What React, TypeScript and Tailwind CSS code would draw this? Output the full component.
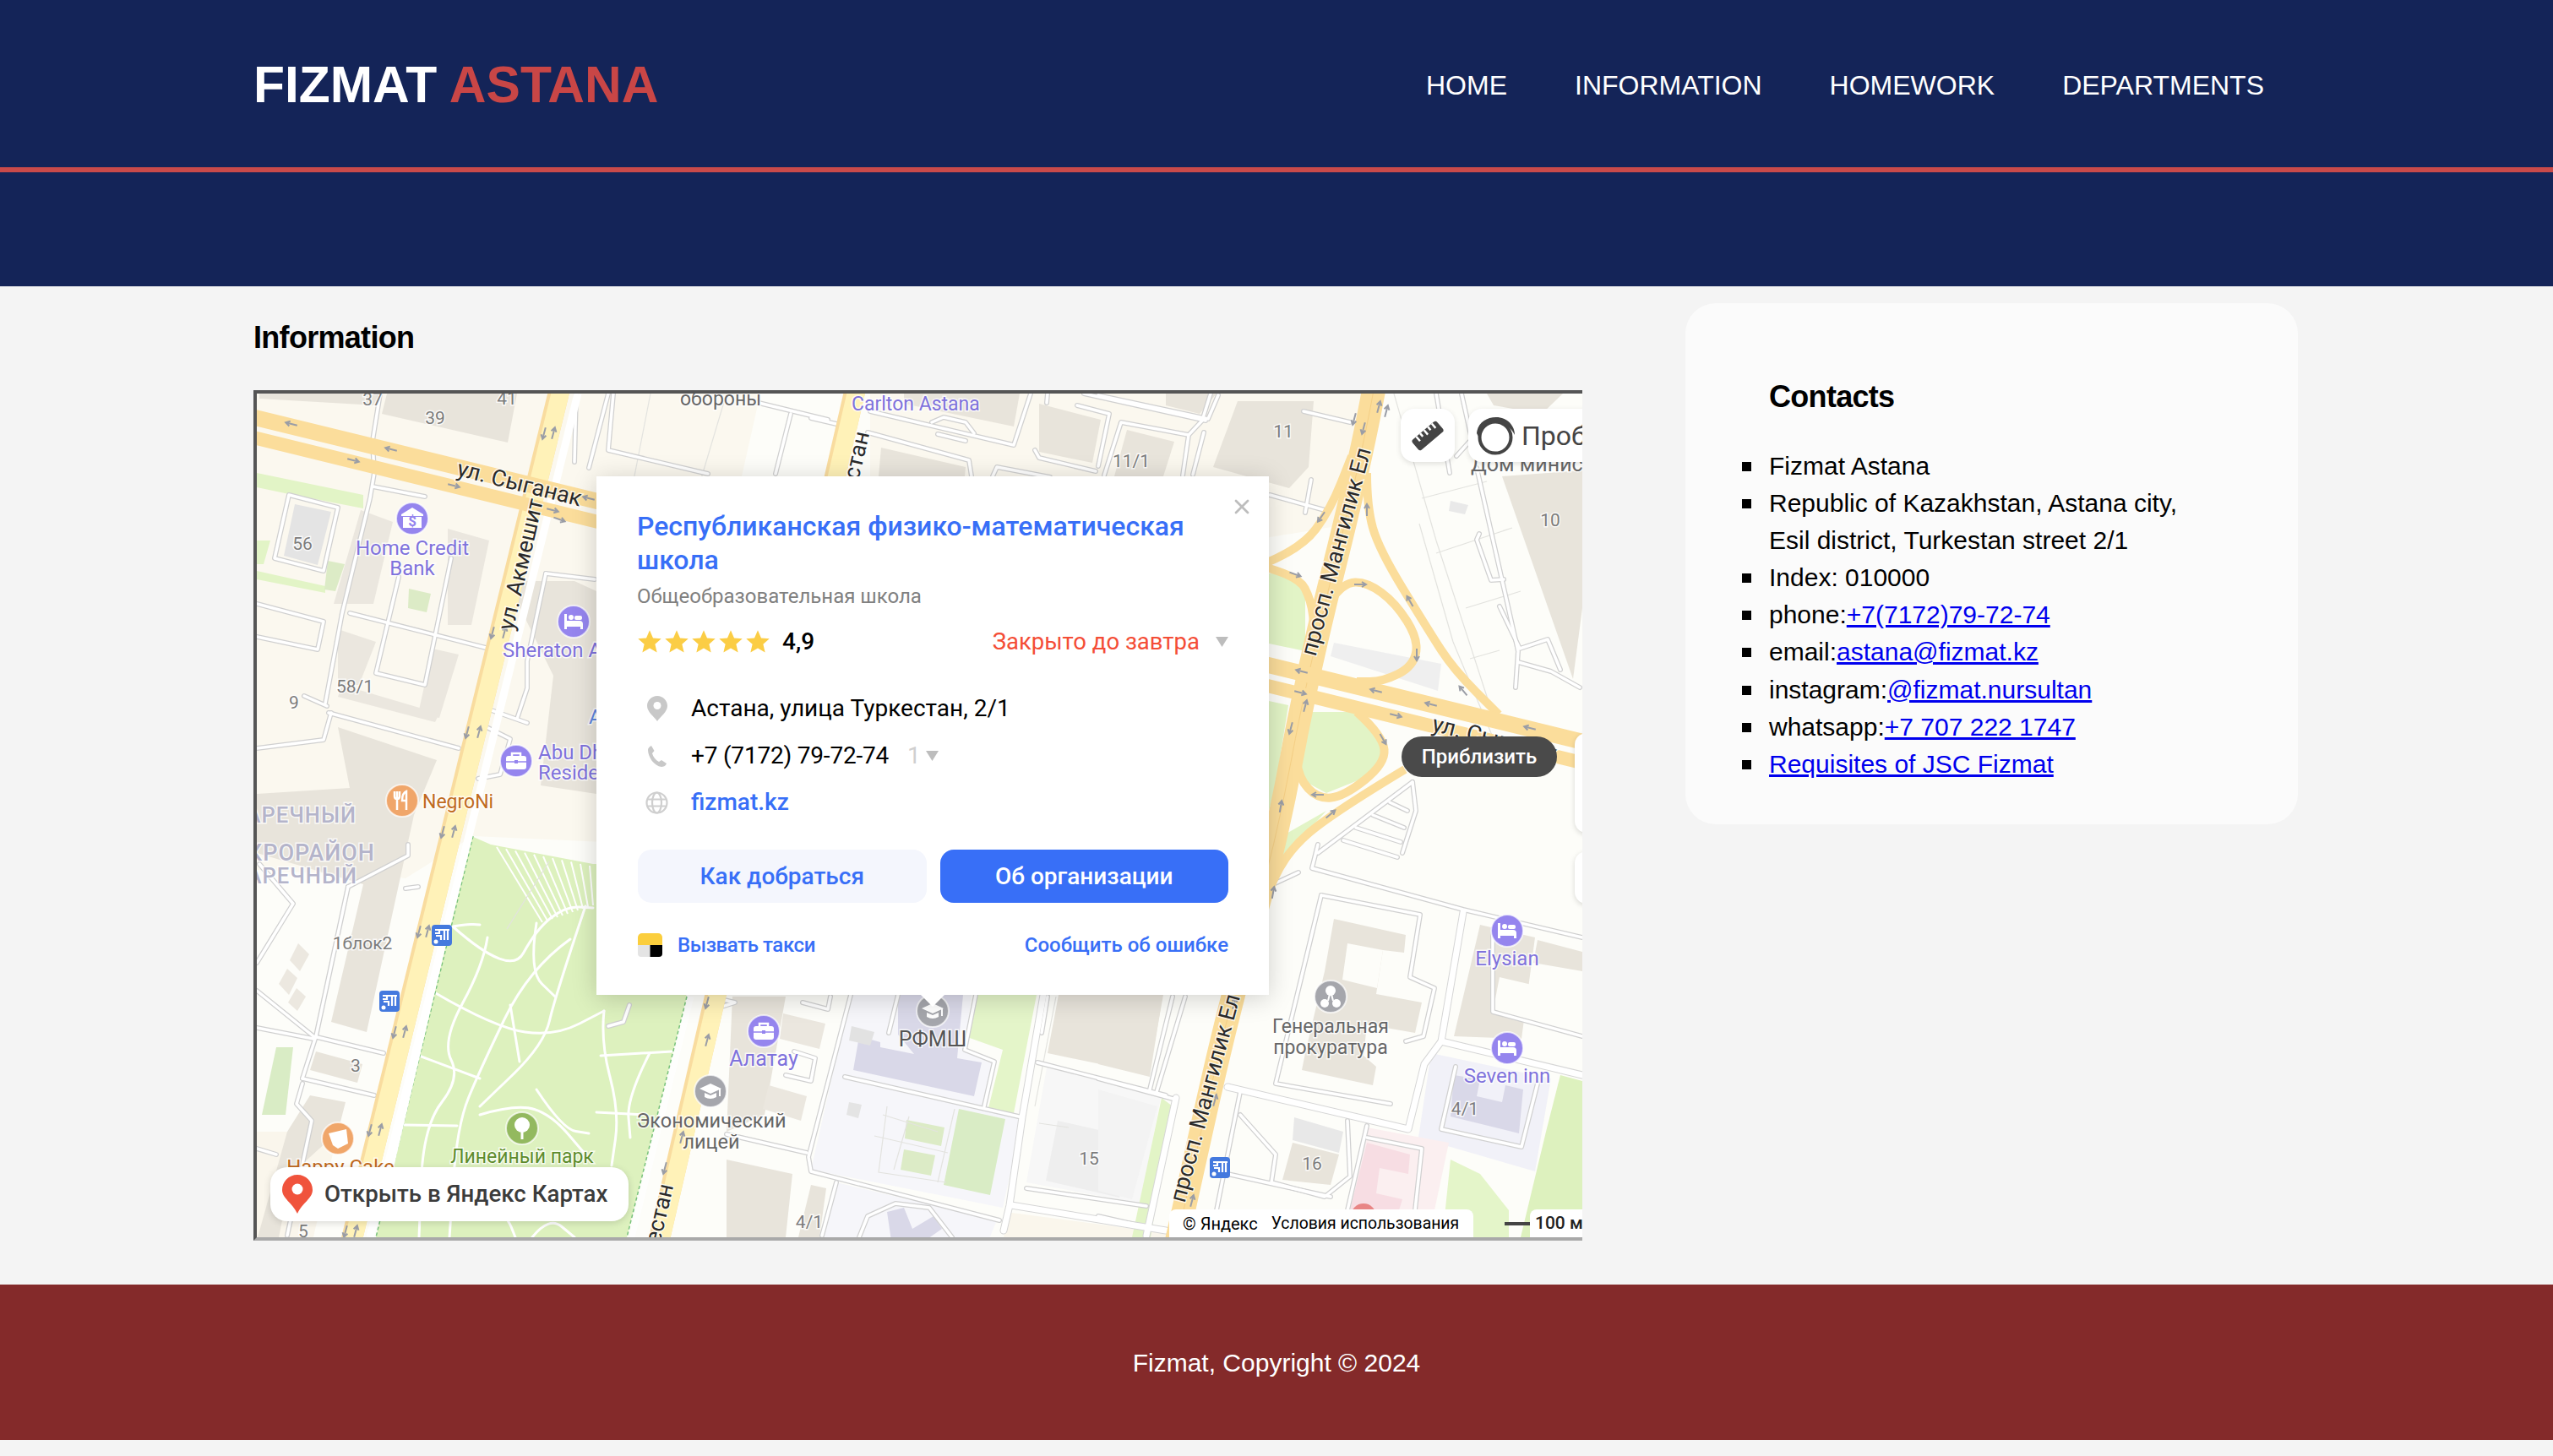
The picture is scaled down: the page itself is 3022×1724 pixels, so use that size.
import { X } from "lucide-react";
import type { ReactNode } from "react";

type Pt = [number, number];

// smooth line through a list of points
function curve(pts: Pt[]) {
  let d = `M${pts[0][0]},${pts[0][1]}`;
  for (let i = 1; i < pts.length - 1; i++) {
    const mx = (pts[i][0] + pts[i + 1][0]) / 2;
    const my = (pts[i][1] + pts[i + 1][1]) / 2;
    d += ` Q${pts[i][0]},${pts[i][1]} ${mx},${my}`;
  }
  const last = pts[pts.length - 1];
  return `${d} L${last[0]},${last[1]}`;
}

const plots: [string, string][] = [
  ["#fbf8ef", "304,466 900,466 780,1000 560,990 480,1040 304,1030"],
  ["#fdfdf9", "304,1030 480,1040 440,1469 304,1469"],
  ["#fbf8ef", "1030,466 1640,466 1600,620 1480,640 1030,640"],
  ["#f6f6fa", "1007,1178 1150,1178 1142,1243 1177,1257 1165,1310 1210,1323 1187,1430 960,1385"],
  ["#f6f6fa", "990,1400 1180,1445 1170,1469 970,1469"],
  ["#f1f1f8", "1694,1247 1836,1277 1817,1387 1679,1347"],
  ["#fbeff0", "1618,1335 1715,1353 1698,1433 1598,1433"],
  ["#faf6ec", "1190,1435 1380,1460 1380,1469 1188,1469"],
  ["#faf6ec", "304,1340 400,1340 370,1469 304,1469"],
  ["#f7f7f7", "1240,1258 1375,1295 1350,1425 1215,1400"],
];

const greens: [string, string][] = [
  ["#ddf1be", "558,990 581,1000 702,1023 740,1023 813,1180 742,1465 445,1465"],
  ["#e2f4c6", "304,560 430,586 430,602 342,585 304,577"],
  ["#e2f4c6", "304,676 385,694 385,702 304,686"],
  ["#e2f4c6", "304,640 320,640 312,668 304,668"],
  ["#dcebc6", "388,664 408,668 397,700 384,698"],
  ["#dcebc6", "484,697 510,703 505,725 483,720"],
  ["#e2f4c6", "1502,679 1528,680 1545,700 1545,771 1502,762"],
  ["#e2f4c6", "1541,843 1606,843 1637,880 1630,915 1570,939 1535,920"],
  ["#e2f4c6", "1502,830 1525,835 1510,930 1502,960"],
  ["#e2f4c6", "1500,1000 1570,960 1525,1010 1500,1060"],
  ["#e4f5c9", "1157,1178 1227,1178 1200,1318 1170,1312 1187,1243 1145,1228"],
  ["#dcebc6", "1073,1326 1118,1335 1114,1357 1071,1348"],
  ["#dcebc6", "1070,1361 1107,1368 1102,1392 1066,1385"],
  ["#d9ecc5", "1135,1313 1190,1325 1172,1415 1117,1403"],
  ["#d9ecc5", "1803,1165 1840,1173 1836,1190 1801,1183"],
  ["#ddf1be", "1847,1273 1873,1280 1873,1465 1800,1465 1830,1340"],
  ["#e4f5c9", "1717,1373 1752,1390 1786,1433 1786,1465 1725,1465 1710,1440"],
  ["#e2f4c6", "1375,1300 1388,1310 1362,1465 1340,1465"],
  ["#d9ecc5", "327,1240 347,1240 338,1320 310,1320"],
];

const buildings: [string, string][] = [
  ["#e8e4db", "458,466 612,466 601,524 452,490"],
  ["#e8e4db", "307,466 450,466 445,480 307,472"],
  ["#e4e4e4", "349,597 392,606 376,669 336,658"],
  ["#ebe7df", "427,604 465,618 442,715 395,715"],
  ["#ebe7df", "530,626 579,640 558,740 530,740"],
  ["#ebe7df", "400,745 445,760 425,811 400,811"],
  ["#ebe7df", "512,768 543,775 520,850 495,845"],
  ["#ebe7df", "405,811 520,845 515,855 400,825"],
  ["#e8e4db", "600,688 680,688 706,700 706,940 640,930 655,800"],
  ["#e8e4db", "400,861 517,900 490,965 434,1222 392,1210 430,1047 304,1010 304,940 414,933"],
  ["#e8e4db", "867,1180 930,1180 905,1320 860,1340"],
  ["#ebe7df", "927,1200 977,1212 970,1242 923,1230"],
  ["#ebe7df", "910,1285 955,1298 948,1327 903,1313"],
  ["#e8e4db", "860,1373 938,1390 930,1465 860,1465"],
  ["#e8e4db", "960,1403 978,1407 970,1465 945,1465"],
  ["#d9d8e8", "1063,1178 1140,1178 1133,1253 1162,1258 1153,1298 1010,1267 1017,1227 1042,1234 1042,1240 1082,1248 1063,1225"],
  ["#d9d8e8", "1050,1435 1070,1430 1080,1455 1105,1440 1115,1455 1095,1469 1055,1469"],
  ["#e8e4db", "1253,1178 1377,1178 1360,1272 1240,1247"],
  ["#eeeeee", "1252,1327 1340,1347 1325,1418 1238,1398"],
  ["#e8e4db", "1465,475 1555,475 1549,553 1526,578 1436,553"],
  ["#e8e4db", "1380,466 1440,466 1420,490 1380,480"],
  ["#e8e4db", "1334,509 1390,523 1377,564 1319,564"],
  ["#e8e4db", "1230,478 1303,497 1293,548 1230,535"],
  ["#e8e4db", "1043,530 1143,553 1142,564 1040,564"],
  ["#e8e4db", "1070,466 1207,466 1200,505 1070,478"],
  ["#e8e4db", "1778,564 1873,557 1873,720 1862,804"],
  ["#e8e4db", "1760,466 1850,466 1825,490 1768,480"],
  ["#e9e9e9", "1717,593 1738,598 1734,609 1715,605"],
  ["#efefef", "1579,761 1706,786 1702,818 1575,777"],
  ["#e8e4db", "1300,1180 1376,1180 1361,1275 1300,1260"],
  ["#f3f3f3", "1300,1290 1370,1310 1340,1420 1300,1410"],
  ["#e8e4db", "1579,1088 1664,1107 1662,1128 1637,1125 1629,1177 1683,1187 1675,1223 1618,1213 1614,1250 1629,1263 1625,1285 1541,1267 1545,1247 1553,1213 1568,1150"],
  ["#fdfdf9", "1595,1117 1637,1125 1630,1170 1589,1160"],
  ["#e8e4db", "1752,1095 1817,1110 1801,1230 1721,1227"],
  ["#fdfdf9", "1775,1157 1873,1180 1873,1227 1767,1198"],
  ["#e8e4db", "1820,1113 1873,1127 1873,1150 1815,1140"],
  ["#d9d8e8", "1721,1273 1752,1278 1748,1298 1778,1305 1782,1285 1803,1290 1798,1342 1717,1322"],
  ["#f7dde3", "1618,1353 1669,1367 1667,1390 1633,1383 1629,1413 1660,1420 1656,1433 1598,1433"],
  ["#e8e4db", "1530,1353 1585,1367 1575,1403 1518,1397"],
  ["#e8e8e8", "1532,1323 1590,1340 1585,1365 1530,1350"],
  ["#e8e4db", "374,1245 429,1260 423,1282 367,1267"],
  ["#e8e4db", "367,1297 409,1305 400,1340 345,1390 330,1465 305,1465 340,1340"],
  ["#ece8e0", "353,1117 366,1130 355,1150 343,1137"],
  ["#ece8e0", "340,1147 352,1158 342,1178 330,1165"],
  ["#ece8e0", "351,1170 362,1180 352,1197 341,1187"],
  ["#e2e2e2", "1008,1215 1035,1222 1030,1238 1005,1232"],
  ["#e4e4e4", "1005,1305 1020,1308 1016,1324 1002,1320"],
];

const lanes = [
  "450,466 441,522 443,560 438,590 405,726 385,833",
  "441,576 503,588",
  "342,586 400,601 383,676 325,661 342,586",
  "414,726 575,767",
  "534,661 503,811 445,797 472,683",
  "389,844 543,886",
  "304,886 383,876 392,844",
  "360,824 387,836",
  "304,715 383,736 376,769 304,754",
  "646,679 624,783 624,815 612,851",
  "579,840 624,856",
  "574,860 604,875 592,917 566,922",
  "646,679 704,686",
  "726,466 720,533 838,561",
  "682,466 680,547",
  "697,554 720,466",
  "894,476 980,497",
  "936,490 918,561",
  "960,495 1003,505",
  "1027,512 1147,545 1150,564",
  "1030,487 1200,527 1220,466",
  "1103,500 1117,494 1143,500 1153,513",
  "1110,514 1143,522",
  "1175,564 1180,553 1243,565",
  "1275,480 1313,490 1300,552",
  "1225,533 1230,542 1297,558",
  "1240,466 1239,477",
  "1307,563 1327,500 1407,515 1400,563",
  "1407,515 1423,498 1433,466",
  "1283,466 1427,498",
  "1425,512 1412,562",
  "1300,468 1430,496 1442,468",
  "1543,487 1598,500",
  "1503,586 1568,604",
  "1552,568 1545,607",
  "1748,554 1797,771 1794,814",
  "1775,718 1799,768 1832,757 1847,793",
  "1751,632 1748,639 1765,687 1780,686",
  "1797,784 1836,795 1870,814",
  "1700,466 1716,560",
  "1730,466 1742,520 1724,540",
  "1672,926 1560,1010",
  "1672,926 1676,960 1660,1010",
  "1645,950 1666,960",
  "1625,965 1662,980",
  "1605,980 1658,997",
  "1590,995 1654,1015",
  "1560,1000 1553,1028 1732,1077 1873,1110",
  "1564,1060 1681,1083 1669,1157 1698,1170 1685,1227 1664,1233",
  "1564,1060 1510,1283 1646,1307",
  "1537,1033 1507,1047",
  "1767,1100 1767,1198 1873,1227",
  "1723,1263 1706,1337 1801,1358 1820,1283",
  "1468,1320 1510,1367 1505,1400 1568,1417 1598,1393 1595,1327",
  "1618,1333 1595,1433",
  "1618,1347 1683,1360 1675,1433",
  "1468,1293 1434,1463",
  "1300,1277 1392,1302",
  "1403,1180 1369,1293",
  "1388,1180 1361,1290",
  "1453,1390 1575,1417",
  "1300,1440 1357,1453",
  "1007,1178 957,1370 960,1387 1183,1445",
  "1063,1178 1052,1223",
  "1155,1178 1142,1243 1177,1257 1165,1310",
  "1000,1275 1210,1323",
  "1228,1258 1380,1297",
  "1215,1407 1357,1428",
  "1240,1180 1233,1223",
  "940,1245 965,1253 960,1280 930,1273",
  "860,1343 955,1365",
  "950,1187 980,1195 983,1180",
  "990,1400 973,1463",
  "1017,1465 1027,1440 1060,1425 1100,1430 1127,1465",
  "304,1173 371,1227 454,1247",
  "304,1217 371,1230",
  "412,1050 374,1227 358,1277",
  "358,1277 443,1297",
  "358,1283 351,1307 369,1327 340,1463",
  "307,1023 347,1070 304,1140",
  "483,1000 483,1013 412,1050",
  "304,1360 327,1367",
  "840,1180 870,1187 845,1195",
  "745,1190 738,1210 720,1215",
  "480,1052 495,1050",
];

const thickLanes = [
  "1392,1300 1357,1463",
  "1453,1287 1667,1337 1686,1260 1706,1233 1732,1080",
  "1706,1233 1873,1273",
  "1235,1178 1210,1323 1195,1427 1188,1457",
  "1197,1427 1380,1457",
];

const thinLines = [
  "1680,620 1720,760 1770,880",
  "1650,466 1700,640 1765,840",
  "1683,590 1760,570",
  "1700,655 1790,625",
  "1735,720 1800,700",
  "1740,780 1775,770",
  "1050,1310 1040,1388 1120,1400",
  "1045,1320 1110,1340",
  "1035,1345 1122,1365",
  "1076,1322 1058,1385",
  "1130,1313 1110,1400",
  "708,1000 724,1080",
  "1230,1330 1265,1335",
  "650,1020 600,1100",
  "770,466 740,620",
  "860,466 820,600",
  "1250,1180 1225,1310",
];

const parkPaths: Pt[][] = [
  [[536, 1097], [552, 1094], [568, 1095]],
  [[537, 1098], [604, 1157], [635, 1100], [670, 1073], [702, 1075]],
  [[675, 1112], [626, 1147], [568, 1267], [541, 1333], [532, 1465]],
  [[514, 1175], [586, 1217], [657, 1227], [715, 1197]],
  [[577, 1110], [572, 1143], [523, 1233], [545, 1277], [501, 1333], [496, 1465]],
  [[496, 1250], [568, 1277]],
  [[479, 1332], [541, 1333]],
  [[693, 1073], [657, 1180], [644, 1237], [568, 1310]],
  [[604, 1190], [615, 1257]],
  [[715, 1197], [711, 1233], [733, 1317], [724, 1380]],
  [[711, 1250], [795, 1245]],
  [[769, 1247], [742, 1300], [746, 1347]],
  [[568, 1320], [612, 1307], [653, 1320], [693, 1367]],
  [[706, 1317], [764, 1320]],
  [[635, 1290], [666, 1337], [697, 1342]],
  [[635, 1093], [626, 1150], [657, 1180]],
  [[630, 1465], [650, 1440], [680, 1465]],
  [[565, 1400], [600, 1440], [610, 1465]],
];

const ramps: Pt[][] = [
  [[1495, 668], [1540, 650], [1575, 603], [1600, 540]],
  [[1618, 560], [1618, 600], [1632, 650], [1690, 745], [1721, 793], [1774, 846]],
  [[1575, 711], [1590, 690], [1618, 689], [1652, 714], [1679, 757], [1673, 789], [1637, 807], [1606, 807]],
  [[1495, 671], [1537, 682], [1552, 711], [1556, 745]],
  [[1606, 843], [1637, 871], [1640, 904], [1591, 943], [1560, 946], [1537, 921], [1533, 880]],
  [[1663, 911], [1575, 964], [1522, 1010], [1495, 1070]],
];

const arrows: [number, number, number][] = [
  [345, 502, -76], [463, 532, -76], [418, 545, 104], [537, 575, 104], [697, 590, -76], [654, 604, 104], [662, 615, 110],
  [644, 513, 195], [655, 513, 15], [583, 749, 195], [597, 749, 15], [553, 867, 195], [567, 867, 15], [524, 985, 195], [537, 985, 15],
  [496, 1103, 195], [506, 1103, 15], [467, 1222, 195], [479, 1222, 15], [438, 1338, 195], [450, 1338, 15], [409, 1458, 195], [421, 1458, 15],
  [837, 1187, 195], [837, 1232, 15], [807, 1347, 15], [787, 1383, 195],
  [1632, 482, 15], [1641, 487, 15], [1603, 496, 195], [1614, 507, 195], [1618, 604, 0], [1564, 612, 215], [1533, 680, 110], [1610, 692, 90],
  [1677, 775, 180], [1669, 712, -30], [1732, 818, -40], [1541, 795, -76], [1629, 818, -76], [1694, 834, -76], [1811, 862, -76],
  [1539, 820, 104], [1652, 847, 104], [1545, 836, 15], [1528, 862, 195], [1637, 875, 150], [1560, 941, -90], [1516, 955, 10], [1575, 964, 50],
  [1507, 1057, 10], [1438, 1303, 15], [1411, 1422, 15], [1461, 1188, 15],
];

const houseNumbers: [number, number, string][] = [
  [441, 473, "37"], [600, 472, "41"], [515, 495, "39"], [358, 644, "56"], [420, 813, "58/1"], [348, 832, "9"],
  [1519, 511, "11"], [1339, 546, "11/1"], [1835, 616, "10"], [429, 1117, "1блок2"], [421, 1262, "3"], [359, 1458, "5"],
  [958, 1447, "4/1"], [1289, 1372, "15"], [1553, 1378, "16"], [1734, 1313, "4/1"],
];

const purple = "#7f72dc";
const poiPurple = "#9585ee";

function Label({
  x,
  y,
  size = 23,
  fill = "#666",
  anchor = "middle",
  rotate,
  weight = 400,
  spacing,
  children,
}: {
  x: number;
  y: number;
  size?: number;
  fill?: string;
  anchor?: "start" | "middle" | "end";
  rotate?: number;
  weight?: number;
  spacing?: number;
  children: ReactNode;
}) {
  return (
    <text
      x={x}
      y={y}
      dy=".35em"
      fontSize={size}
      fontWeight={weight}
      fill={fill}
      textAnchor={anchor}
      letterSpacing={spacing}
      stroke="#fff"
      strokeOpacity={0.75}
      strokeWidth={3}
      paintOrder="stroke"
      transform={rotate ? `rotate(${rotate} ${x} ${y})` : undefined}
    >
      {children}
    </text>
  );
}

function Poi({ x, y, color = poiPurple, children }: { x: number; y: number; color?: string; children?: ReactNode }) {
  return (
    <g transform={`translate(${x} ${y})`}>
      <circle r={19} fill={color} stroke="#fff" strokeOpacity={0.7} strokeWidth={2} />
      {children}
    </g>
  );
}

const BedGlyph = () => (
  <g fill="#fff">
    <path d="M-11,-9h3v8h15a4,4 0 0 1 4,4v6h-3v-3h-16v3h-3z" />
    <circle cx={-3} cy={-5} r={3} />
    <rect x={1} y={-7} width={9} height={5} rx={2} />
  </g>
);

const CaseGlyph = ({ color = poiPurple }: { color?: string }) => (
  <g>
    <path d="M-5,-6v-3h10v3" fill="none" stroke="#fff" strokeWidth={2.5} />
    <rect x={-12} y={-6} width={24} height={16} rx={3} fill="#fff" />
    <path d="M-12,1h24" stroke={color} strokeWidth={1.5} />
    <rect x={-2} y={-1} width={4} height={4} fill={color} />
  </g>
);

const CapGlyph = () => (
  <g fill="#fff">
    <path d="M0,-9L13,-3L0,3L-13,-3z" />
    <path d="M-7,2v5q7,4 14,0v-5l-7,3z" />
    <rect x={10} y={-3} width={2} height={9} />
  </g>
);

function Transit({ x, y }: { x: number; y: number }) {
  return (
    <g transform={`translate(${x - 12} ${y - 12})`}>
      <rect width={24} height={25} rx={4} fill="#4479de" />
      <path d="M4,6h17M9,6v4h-5M15,6v12M19,6v12M5,13h6v5" fill="none" stroke="#fff" strokeWidth={2.2} />
      <circle cx={5} cy={20} r={2.5} fill="#fff" />
    </g>
  );
}

function RoadLabel({ x, y, rotate, anchor = "middle", children }: { x: number; y: number; rotate: number; anchor?: "start" | "middle" | "end"; children: ReactNode }) {
  return (
    <Label x={x} y={y} rotate={rotate} size={27} fill="#2a2a2a" anchor={anchor}>
      {children}
    </Label>
  );
}

function MapDrawing() {
  return (
    <svg
      width={1569}
      height={999}
      viewBox="304 466 1569 999"
      className="block font-['Roboto',sans-serif]"
    >
      <rect x={304} y={466} width={1569} height={999} fill="#fdfdf9" />
      {plots.map(([c, p]) => (
        <polygon key={p} points={p} fill={c} />
      ))}
      {greens.map(([c, p]) => (
        <polygon key={p} points={p} fill={c} />
      ))}
      {buildings.map(([c, p]) => (
        <polygon key={p} points={p} fill={c} />
      ))}
      <circle cx={1614} cy={1440} r={15} fill="#e88585" />

      {/* striped patch at the top of the park */}
      {Array.from({ length: 11 }, (_, i) => (
        <line key={i} x1={588 + i * 11} y1={1003 + i * 2.2} x2={642 + i * 6} y2={1092 - i * 2} stroke="#fff" strokeWidth={2} />
      ))}
      {parkPaths.map((p, i) => (
        <path key={i} d={curve(p)} fill="none" stroke="#fff" strokeWidth={3} strokeLinecap="round" />
      ))}
      <path d="M560,990 L445,1465" stroke="#78c27c" strokeWidth={1.5} strokeDasharray="4 3" />
      <path d="M813,1180 L742,1465" stroke="#78c27c" strokeWidth={1.5} strokeDasharray="4 3" />
      <path d="M1235,1180 L1218,1265" stroke="#78c27c" strokeWidth={1.5} strokeDasharray="4 3" />

      {thinLines.map((p) => (
        <polyline key={p} points={p} fill="none" stroke="#e3e3df" strokeWidth={1.2} />
      ))}
      <g fill="none" strokeLinejoin="round" strokeLinecap="round">
        {thickLanes.map((p) => (
          <polyline key={p} points={p} stroke="#d6d6d6" strokeWidth={9} />
        ))}
        {lanes.map((p) => (
          <polyline key={p} points={p} stroke="#d0d0d0" strokeWidth={6} />
        ))}
        {lanes.map((p) => (
          <polyline key={p + "w"} points={p} stroke="#fff" strokeWidth={3.5} />
        ))}
        {thickLanes.map((p) => (
          <polyline key={p + "w"} points={p} stroke="#fff" strokeWidth={7} />
        ))}
      </g>

      {/* sidewalks next to the avenues */}
      <path d="M684,466 L438,1465" stroke="#fff" strokeWidth={9} />
      <path d="M553,1000 L450,1440" stroke="#fff" strokeWidth={5} />
      <path d="M818,1180 L748,1465" stroke="#fff" strokeWidth={7} opacity={0.7} />

      {/* roads */}
      <g fill="none" strokeLinejoin="round">
        <path d="M662,462 L416,1469" stroke="#f9dc9f" strokeWidth={25} />
        <path d="M664,462 L418,1469" stroke="#fff2b8" strokeWidth={21} />
        <path d="M1012,462 L780,1469" stroke="#f9dc9f" strokeWidth={25} />
        <path d="M1014,462 L782,1469" stroke="#fff2b8" strokeWidth={21} />
        {ramps.map((p, i) => (
          <path key={i} d={curve(p)} stroke="#fbdd9b" strokeWidth={10} />
        ))}
        <path d={curve([[1626, 462], [1612, 540], [1547, 800], [1510, 1000], [1455, 1190], [1393, 1469]])} stroke="#fbdd9b" strokeWidth={28} />
        <path d={curve([[1626, 462], [1612, 540], [1547, 800], [1510, 1000], [1455, 1190], [1393, 1469]])} stroke="#f5cf85" strokeWidth={1} />
        <path d="M300,494 L1880,880" stroke="#fbdd9b" strokeWidth={19} />
        <path d="M300,518 L1880,905" stroke="#fbdd9b" strokeWidth={16} />
      </g>
      {arrows.map(([x, y, a], i) => (
        <path
          key={i}
          transform={`translate(${x} ${y}) rotate(${a})`}
          d="M0,7V-6M-3,-2L0,-7L3,-2"
          fill="none"
          stroke="#9a9da6"
          strokeWidth={2}
        />
      ))}

      {houseNumbers.map(([x, y, t]) => (
        <Label key={`${x}-${y}`} x={x} y={y} size={21} fill="#7c7c7c">
          {t}
        </Label>
      ))}

      <RoadLabel x={615} y={572} rotate={14}>ул. Сыганак</RoadLabel>
      <RoadLabel x={616} y={668} rotate={-77}>ул. Акмешит</RoadLabel>
      <RoadLabel x={1581} y={653} rotate={-75}>просп. Мангилик Ел</RoadLabel>
      <RoadLabel x={1426} y={1300} rotate={-75}>просп. Мангилик Ел</RoadLabel>
      <RoadLabel x={1696} y={856} rotate={14} anchor="start">ул. Сыганак</RoadLabel>
      <RoadLabel x={1020} y={511} rotate={-77} anchor="end">ул. Туркестан</RoadLabel>
      <RoadLabel x={788} y={1402} rotate={-77} anchor="end">ул. Туркестан</RoadLabel>

      <Label x={805} y={472} anchor="start" size={23} fill="#666">обороны</Label>
      <Label x={1008} y={478} anchor="start" size={23} fill={purple}>Carlton Astana</Label>
      <Label x={1741} y={549} anchor="start" size={25} fill="#666">Дом министерств</Label>

      <Label x={422} y={965} anchor="end" size={25.5} weight={500} fill="#b4b4ca" spacing={1}>ЗАРЕЧНЫЙ</Label>
      <Label x={444} y={1010} anchor="end" size={27} weight={500} fill="#b4b4ca" spacing={1}>МИКРОРАЙОН</Label>
      <Label x={423} y={1037} anchor="end" size={25.5} weight={500} fill="#b4b4ca" spacing={1}>ЗАРЕЧНЫЙ</Label>

      <Poi x={488} y={614}>
        <path d="M-13,-5L0,-13L13,-5v2h-26z M-11,-2h22v13h-22z" fill="#fff" />
        <text x={0} y={9} fontSize={17} fontWeight={700} fill={poiPurple} textAnchor="middle">$</text>
      </Poi>
      <Label x={488} y={649} size={24} fill={purple}>Home Credit</Label>
      <Label x={488} y={673} size={24} fill={purple}>Bank</Label>

      <Poi x={679} y={736}><BedGlyph /></Poi>
      <Label x={595} y={770} anchor="start" size={24} fill={purple}>Sheraton Astana</Label>
      <Label x={697} y={849} anchor="start" size={24} fill="#5f86de">Astana</Label>

      <Poi x={611} y={901}><CaseGlyph /></Poi>
      <Label x={637} y={891} anchor="start" size={24} fill={purple}>Abu Dhabi</Label>
      <Label x={637} y={915} anchor="start" size={24} fill={purple}>Residence</Label>

      <Poi x={476} y={948} color="#f0a66a">
        <path d="M-6,-11v9M-9,-11v6q0,3 3,3t3,-3v-6M-6,-2v13M5,11V-11q-5,2 -5,11h5" fill="none" stroke="#fff" strokeWidth={2.5} />
      </Poi>
      <Label x={500} y={949} anchor="start" size={23} fill="#c06a20">NegroNi</Label>

      <Poi x={904} y={1221}><CaseGlyph /></Poi>
      <Label x={904} y={1253} size={25} fill={purple}>Алатау</Label>

      <Poi x={841} y={1292} color="#a5a6ac"><CapGlyph /></Poi>
      <Label x={842} y={1327} size={23.5}>Экономический</Label>
      <Label x={842} y={1352} size={23.5}>лицей</Label>

      <Poi x={618} y={1336} color="#93b95f">
        <circle cy={-4} r={9} fill="#fff" />
        <rect x={-1.5} y={2} width={3} height={11} fill="#fff" />
      </Poi>
      <Label x={618} y={1369} size={23} fill="#5e8c2c">Линейный парк</Label>

      <Poi x={400} y={1348} color="#f0a66a">
        <path d="M-11,-6L10,-11L12,6L0,12L-6,8z" fill="#fff" />
      </Poi>
      <Label x={403} y={1382} size={24} fill="#c06a20">Happy Cake</Label>

      <Transit x={523} y={1107} />
      <Transit x={461} y={1185} />
      <Transit x={1444} y={1382} />

      <Poi x={1104} y={1197} color="#a5a6ac"><CapGlyph /></Poi>
      <Label x={1104} y={1230} size={25} fill="#555">РФМШ</Label>

      <Poi x={1575} y={1180} color="#a5a6ac">
        <circle cy={-7} r={6} fill="#fff" />
        <path d="M-1,-3L-3,5M1,-3L3,5" stroke="#fff" strokeWidth={2} />
        <circle cx={-7} cy={8} r={5} fill="#fff" />
        <circle cx={7} cy={8} r={5} fill="#fff" />
      </Poi>
      <Label x={1575} y={1215} size={23}>Генеральная</Label>
      <Label x={1575} y={1240} size={23}>прокуратура</Label>

      <Poi x={1784} y={1102}><BedGlyph /></Poi>
      <Label x={1784} y={1135} size={24} fill={purple}>Elysian</Label>
      <Poi x={1784} y={1241}><BedGlyph /></Poi>
      <Label x={1784} y={1274} size={24} fill={purple}>Seven inn</Label>
    </svg>
  );
}

function Star() {
  return (
    <svg width={30} height={30} viewBox="0 0 24 24" className="mr-[2px] shrink-0">
      <path d="M12 1l3.200 7.300 7.800.7-5.900 5.200 1.800 7.800-6.900-4.100L5.100 22l1.800-7.800L1 9l7.800-.7z" fill="#fbcd45" />
    </svg>
  );
}

const Caret = ({ color = "#bdbdbd" }: { color?: string }) => (
  <svg width={15} height={12} viewBox="0 0 15 12" className="shrink-0">
    <path d="M0 0h15L7.500 12z" fill={color} />
  </svg>
);

function PlaceCard() {
  return (
    <div className="absolute left-[402px] top-[98px] flex h-[614px] w-[796px] flex-col bg-white pl-[48px] pr-[48px] pt-[39px] font-['Roboto',sans-serif] shadow-[0_4px_28px_rgba(0,0,0,0.18)]">
      <X className="absolute right-[18px] top-[22px] size-[28px] text-[#bdbdbd]" strokeWidth={2.4} />
      <div className="text-[32px] font-medium leading-[40px] text-[#386ff7]">
        Республиканская физико-математическая
        <br />
        школа
      </div>
      <div className="mt-[8px] text-[24px] leading-[30px] text-[#808080]">Общеобразовательная школа</div>
      <div className="mt-[21px] flex h-[36px] items-center">
        {[0, 1, 2, 3, 4].map((i) => (
          <Star key={i} />
        ))}
        <span className="ml-[12px] text-[28px] font-medium text-black">4,9</span>
        <span className="ml-auto text-[27.5px] text-[#f44d36]">Закрыто до завтра</span>
        <span className="ml-[19px]">
          <Caret />
        </span>
      </div>
      <div className="mt-[33px] flex h-[56px] items-center text-[28px] text-black">
        <svg width={24} height={30} viewBox="0 0 24 30" className="ml-[12px] mr-[28px]">
          <path d="M12 0C5.400 0 0 5.200 0 11.700 0 19 8 24 12 30c4-6 12-11 12-18.300C24 5.200 18.600 0 12 0z" fill="#c8c8c8" />
          <circle cx={12} cy={11.5} r={4.5} fill="#fff" />
        </svg>
        Астана, улица Туркестан, 2/1
      </div>
      <div className="flex h-[55px] items-center text-[28px] text-black">
        <svg width={24} height={26} viewBox="0 0 24 26" className="ml-[12px] mr-[28px]">
          <path d="M5 1l3.500 6-2.500 3c1 4 4 8 8 10l3-2 6 4c-1 3-4 4-6 4C8 25 1 14 1 6c0-2 1.500-4 4-5z" fill="#c8c8c8" />
        </svg>
        <span className="tracking-[-0.2px]">+7 (7172) 79-72-74</span>
        <span className="ml-[22px] text-[28px] text-[#d0d0d0]">1</span>
        <span className="ml-[6px]">
          <Caret />
        </span>
      </div>
      <div className="flex h-[56px] items-center text-[28px] font-medium text-[#386ff7]">
        <svg width={27} height={27} viewBox="0 0 27 27" fill="none" stroke="#cfcfcf" strokeWidth={2.2} className="ml-[10px] mr-[27px]">
          <circle cx={13.5} cy={13.5} r={12} />
          <ellipse cx={13.5} cy={13.5} rx={5.5} ry={12} />
          <path d="M2 9.500h23M2 17.500h23" />
        </svg>
        fizmat.kz
      </div>
      <div className="mt-[28px] flex h-[63px] gap-[16px] pl-[1px] text-[28px] font-medium">
        <div className="flex flex-1 items-center justify-center rounded-[16px] bg-[#f4f6fd] text-[#386ff7]">Как добраться</div>
        <div className="flex flex-1 items-center justify-center rounded-[16px] bg-[#386ff7] text-white">Об организации</div>
      </div>
      <div className="mt-[35px] flex h-[30px] items-center pl-[1px] text-[24px] font-medium text-[#386ff7]">
        <svg width={29} height={28} viewBox="0 0 29 28" className="mr-[18px]">
          <path d="M5 0h19a5 5 0 0 1 5 5v9H0V5a5 5 0 0 1 5-5z" fill="#fbce3d" />
          <path d="M0 14h14.500v14H4a4 4 0 0 1-4-4z" fill="#e4e4e4" />
          <path d="M14.500 14H29v10a4 4 0 0 1-4 4H14.500z" fill="#000" />
        </svg>
        <span className="tracking-[-0.4px]">Вызвать такси</span>
        <span className="ml-auto">Сообщить об ошибке</span>
      </div>
      <div className="absolute bottom-[-14px] left-[384px] size-0 border-x-[14px] border-t-[14px] border-x-transparent border-t-white" />
    </div>
  );
}

function YandexMap() {
  return (
    <div className="relative h-[1007px] w-[1573px] overflow-hidden border-y-4 border-l-4 border-t-[#555555] border-b-[#a9a9a9] border-l-[#555555]">
      <MapDrawing />
      <PlaceCard />

      <div className="absolute left-[16px] top-[916px] flex h-[64px] w-[424px] items-center rounded-[20px] bg-white pl-[14px] font-['Roboto',sans-serif] text-[27.7px] font-medium text-[#3c3c3c] shadow-[0_2px_8px_rgba(0,0,0,0.15)]">
        <svg width={36} height={46} viewBox="0 0 36 46" className="mr-[14px] shrink-0">
          <path d="M18 0C8 0 0 8 0 18c0 10 12 15 18 28 6-13 18-18 18-28C36 8 28 0 18 0z" fill="#f0533c" />
          <circle cx={18} cy={17} r={6.5} fill="#fff" />
        </svg>
        Открыть в Яндекс Картах
      </div>

      <div className="absolute left-[1080px] top-[966px] flex h-[33px] w-[360px] items-center whitespace-nowrap rounded-t-[8px] bg-white pl-[16px] font-['Roboto',sans-serif] text-[20px] text-black">
        © Яндекс
        <span className="ml-[16px] text-[19.4px]">Условия использования</span>
      </div>
      <div className="absolute left-[1477px] top-[981px] h-[4px] w-[30px] bg-[#444444]" />
      <div className="absolute left-[1507px] top-[966px] flex h-[33px] w-[70px] items-center whitespace-nowrap rounded-tl-[8px] bg-white pl-[6px] font-['Roboto',sans-serif] text-[21px] font-medium text-[#222222]">
        100&nbsp;м
      </div>

      <div className="absolute left-[1355px] top-[406px] flex h-[48px] w-[184px] items-center justify-center rounded-full bg-[#4a4a4a] font-['Roboto',sans-serif] text-[24px] font-medium text-white">
        Приблизить
      </div>

      <div className="absolute left-[1354px] top-[18px] flex h-[63px] w-[64px] items-center justify-center rounded-[16px] bg-white shadow-[0_2px_6px_rgba(0,0,0,0.12)]">
        <svg width={40} height={40} viewBox="0 0 40 40">
          <g transform="rotate(-40 20 20)">
            <rect x={1} y={12} width={38} height={16} rx={3} fill="#444444" />
            <path d="M9 12v7M15 12v5M21 12v7M27 12v5M33 12v7" stroke="#fff" strokeWidth={2.5} />
          </g>
        </svg>
      </div>
      <div className="absolute left-[1434px] top-[18px] flex h-[63px] w-[200px] items-center rounded-[16px] bg-white pl-[8px] font-['Roboto',sans-serif] text-[32px] text-[#444444] shadow-[0_2px_6px_rgba(0,0,0,0.12)]">
        <svg width={48} height={46} viewBox="0 0 48 46" fill="none" className="mr-[7px] shrink-0">
          <circle cx={24} cy={25} r={18.5} stroke="#444444" strokeWidth={4} />
          <path d="M2 20C3 8 13 1 25 1c12 0 22 9 22 21-4-8-10-13-20-15C17 5 8 10 4 24z" fill="#444444" />
        </svg>
        Пробки
      </div>

      <div className="absolute left-[1560px] top-[402px] h-[118px] w-[20px] rounded-l-[14px] bg-white shadow-[0_2px_6px_rgba(0,0,0,0.15)]" />
      <div className="absolute left-[1560px] top-[542px] h-[62px] w-[20px] rounded-l-[14px] bg-white shadow-[0_2px_6px_rgba(0,0,0,0.15)]" />
    </div>
  );
}

const linkClass = "text-[#0000ee] underline";

function ContactItem({ children }: { children: ReactNode }) {
  return (
    <li className="flex">
      <span className="mr-[21px] mt-[17px] size-[11px] shrink-0 bg-black" />
      <div>{children}</div>
    </li>
  );
}

export default function App() {
  return (
    <div className="min-h-[1724px] bg-[#f4f4f4] font-['Liberation_Sans',Arial,sans-serif] text-black">
      <header className="h-[339px] bg-[#142458]">
        <div className="flex h-[198px] items-center justify-between pl-[300px] pr-[342px] pt-[3px]">
          <div className="text-[60.5px] font-bold leading-none text-white">
            FIZMAT <span className="text-[#c94646]">ASTANA</span>
          </div>
          <nav className="flex gap-[80px] text-[32px] text-white">
            <span>HOME</span>
            <span>INFORMATION</span>
            <span>HOMEWORK</span>
            <span>DEPARTMENTS</span>
          </nav>
        </div>
        <div className="h-[6px] bg-[#c94a4a]" />
      </header>

      <main className="flex h-[1182px] pl-[300px]">
        <section className="w-[1573px] pt-[39px]">
          <h3 className="text-[36px] font-bold leading-[43px] tracking-[-0.7px]">Information</h3>
          <div className="mt-[41px]">
            <YandexMap />
          </div>
        </section>

        <aside className="ml-[122px] mt-[20px] h-[617px] w-[725px] rounded-[36px] bg-[#fbfbfb] pl-[19px] pt-[89px]">
          <h3 className="ml-[80px] text-[36px] font-bold leading-[43px] tracking-[-0.7px]">Contacts</h3>
          <ul className="mt-[39px] w-[590px] pl-[48px] text-[30px] leading-[44.1px]">
            <ContactItem>Fizmat Astana</ContactItem>
            <ContactItem>Republic of Kazakhstan, Astana city, Esil district, Turkestan street 2/1</ContactItem>
            <ContactItem>Index: 010000</ContactItem>
            <ContactItem>phone:<a className={linkClass} href="#phone">+7(7172)79-72-74</a></ContactItem>
            <ContactItem>email:<a className={linkClass} href="#email">astana@fizmat.kz</a></ContactItem>
            <ContactItem>instagram:<a className={linkClass} href="#instagram">@fizmat.nursultan</a></ContactItem>
            <ContactItem>whatsapp:<a className={linkClass} href="#whatsapp">+7 707 222 1747</a></ContactItem>
            <ContactItem><a className={linkClass} href="#requisites">Requisites of JSC Fizmat</a></ContactItem>
          </ul>
        </aside>
      </main>

      <footer className="flex h-[184px] items-center justify-center bg-[#842a2a] text-[30px] text-white">
        Fizmat, Copyright © 2024
      </footer>
    </div>
  );
}
